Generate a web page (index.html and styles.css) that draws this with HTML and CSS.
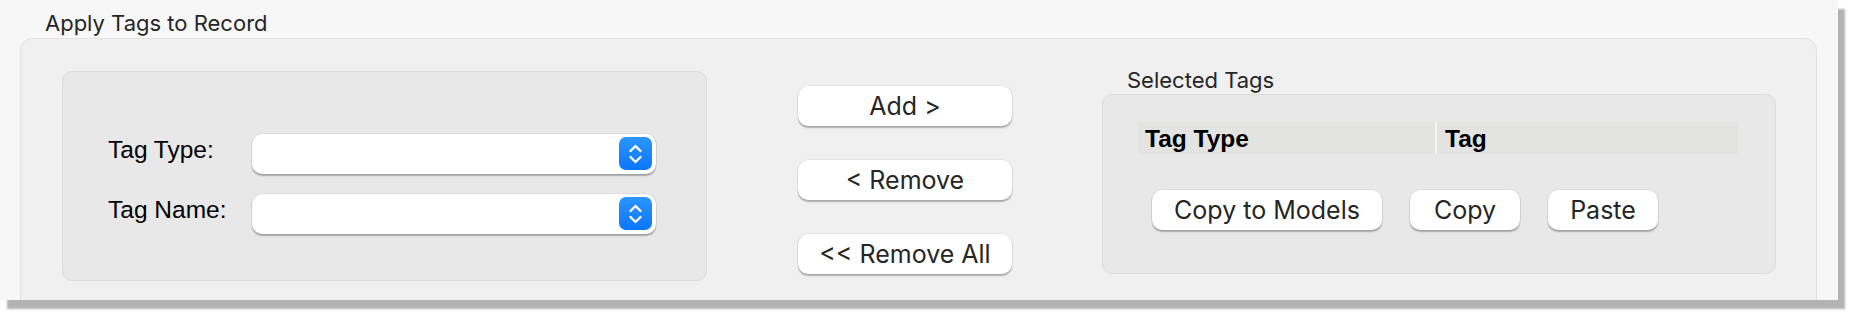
FILE: index.html
```html
<!DOCTYPE html>
<html lang="en">
<head>
    <meta charset="UTF-8">
    <title>Apply Tags to Record</title>
    <link rel="stylesheet" href="styles.css">
</head>
<body>
<div class="window">
    <div class="title">Apply Tags to Record</div>
    <div class="panel">
        <div class="tag-form">
            <div class="form-row">
                <label>Tag Type:</label>
                <div class="popup">
                    <svg class="stepper" width="33" height="33" viewBox="0 0 33 33">
                        <defs>
                            <linearGradient id="blue1" x1="0" y1="0" x2="0" y2="1">
                                <stop offset="0" stop-color="#2c95ff"/>
                                <stop offset="1" stop-color="#0a77fe"/>
                            </linearGradient>
                        </defs>
                        <rect width="33" height="33" rx="7" fill="url(#blue1)"/>
                        <path d="M11.5 14 L16.5 9 L21.5 14" fill="none" stroke="#fff" stroke-width="2.4" stroke-linecap="round" stroke-linejoin="round"/>
                        <path d="M11.5 20 L16.5 25 L21.5 20" fill="none" stroke="#fff" stroke-width="2.4" stroke-linecap="round" stroke-linejoin="round"/>
                    </svg>
                </div>
            </div>
            <div class="form-row">
                <label>Tag Name:</label>
                <div class="popup">
                    <svg class="stepper" width="33" height="33" viewBox="0 0 33 33">
                        <rect width="33" height="33" rx="7" fill="url(#blue1)"/>
                        <path d="M11.5 14 L16.5 9 L21.5 14" fill="none" stroke="#fff" stroke-width="2.4" stroke-linecap="round" stroke-linejoin="round"/>
                        <path d="M11.5 20 L16.5 25 L21.5 20" fill="none" stroke="#fff" stroke-width="2.4" stroke-linecap="round" stroke-linejoin="round"/>
                    </svg>
                </div>
            </div>
        </div>

        <div class="move-btns">
            <button class="btn">Add &gt;</button>
            <button class="btn">&lt; Remove</button>
            <button class="btn">&lt;&lt; Remove All</button>
        </div>

        <div class="selected">
            <div class="group-title">Selected Tags</div>
            <div class="selected-box">
                <div class="tag-head">
                    <div class="col col-type">Tag Type</div>
                    <div class="col col-tag">Tag</div>
                </div>
                <div class="copy-btns">
                    <button class="btn btn-models">Copy to Models</button>
                    <button class="btn btn-small">Copy</button>
                    <button class="btn btn-small">Paste</button>
                </div>
            </div>
        </div>
    </div>
</div>
</body>
</html>
```

FILE: styles.css
```css
html, body {
    margin: 0;
    padding: 0;
    background: #fff;
}

body {
    height: 314px;
    font-family: Inter, "Open Sans", sans-serif;
    color: #262626;
}

.window {
    width: 1838px;
    height: 300px;
    overflow: hidden;
    background: #f7f7f7;
    box-shadow: 7px 9px 2px #b3b3b3;
}

.title {
    height: 38px;
    box-sizing: border-box;
    padding: 10px 0 0 45px;
    font-size: 22px;
    line-height: 27px;
}

.panel {
    margin-left: 20px;
    width: 1797px;
    height: 290px;
    box-sizing: border-box;
    padding: 32px 0 0 41px;
    display: flex;
    align-items: flex-start;
    background: #f0f0f0;
    border: 1px solid #e2e2e2;
    border-radius: 12px;
}

/* left form box */
.tag-form {
    width: 645px;
    height: 210px;
    box-sizing: border-box;
    padding: 62px 0 0 45px;
    display: flex;
    flex-direction: column;
    gap: 20px;
    background: #e8e8e8;
    border: 1px solid #dddddd;
    border-radius: 10px;
}

.form-row {
    display: flex;
    align-items: flex-start;
}

.form-row label {
    width: 144px;
    font-family: "Liberation Sans", Arial, sans-serif;
    font-size: 24.5px;
    line-height: 32px;
    color: #000;
}

.popup {
    width: 404px;
    height: 40px;
    box-sizing: border-box;
    padding: 0 4px 1px 0;
    display: flex;
    align-items: center;
    justify-content: flex-end;
    background: #fff;
    border-radius: 10px;
    box-shadow: 0 0 0 0.5px rgba(0, 0, 0, 0.08), 0 1.5px 1.5px rgba(0, 0, 0, 0.28);
}

.stepper {
    display: block;
}

/* buttons */
.btn {
    height: 40px;
    padding: 0;
    border: none;
    border-radius: 10px;
    background: #fff;
    font-family: Inter, "Open Sans", sans-serif;
    font-size: 25px;
    line-height: 40px;
    color: #262626;
    text-align: center;
    box-shadow: 0 0 0 0.5px rgba(0, 0, 0, 0.08), 0 1.5px 1.5px rgba(0, 0, 0, 0.28);
}

.move-btns {
    margin: 15px 0 0 91px;
    width: 214px;
    display: flex;
    flex-direction: column;
    gap: 34px;
}

.move-btns .btn {
    width: 214px;
}

/* selected tags */
.selected {
    margin: -1px 0 0 90px;
    width: 674px;
}

.group-title {
    padding-left: 25px;
    font-size: 22px;
    line-height: 20px;
    height: 24px;
}

.selected-box {
    height: 180px;
    box-sizing: border-box;
    padding: 27px 37px 0 35px;
    background: #e8e8e8;
    border: 1px solid #dddddd;
    border-radius: 10px;
}

.tag-head {
    display: flex;
    height: 32px;
    background: #e3e3e2;
    font-family: "Liberation Sans", Arial, sans-serif;
    font-weight: bold;
    font-size: 24.5px;
    color: #000;
}

.tag-head .col {
    box-sizing: border-box;
    padding-top: 2px;
    line-height: 30px;
}

.col-type {
    width: 299px;
    padding-left: 7px;
    border-right: 2px solid #f6f6f6;
}

.col-tag {
    flex: 1;
    padding-left: 8px;
}

.copy-btns {
    margin: 36px 0 0 14px;
    display: flex;
    gap: 28px;
}

.btn-models {
    width: 230px;
}

.btn-small {
    width: 110px;
}
```
